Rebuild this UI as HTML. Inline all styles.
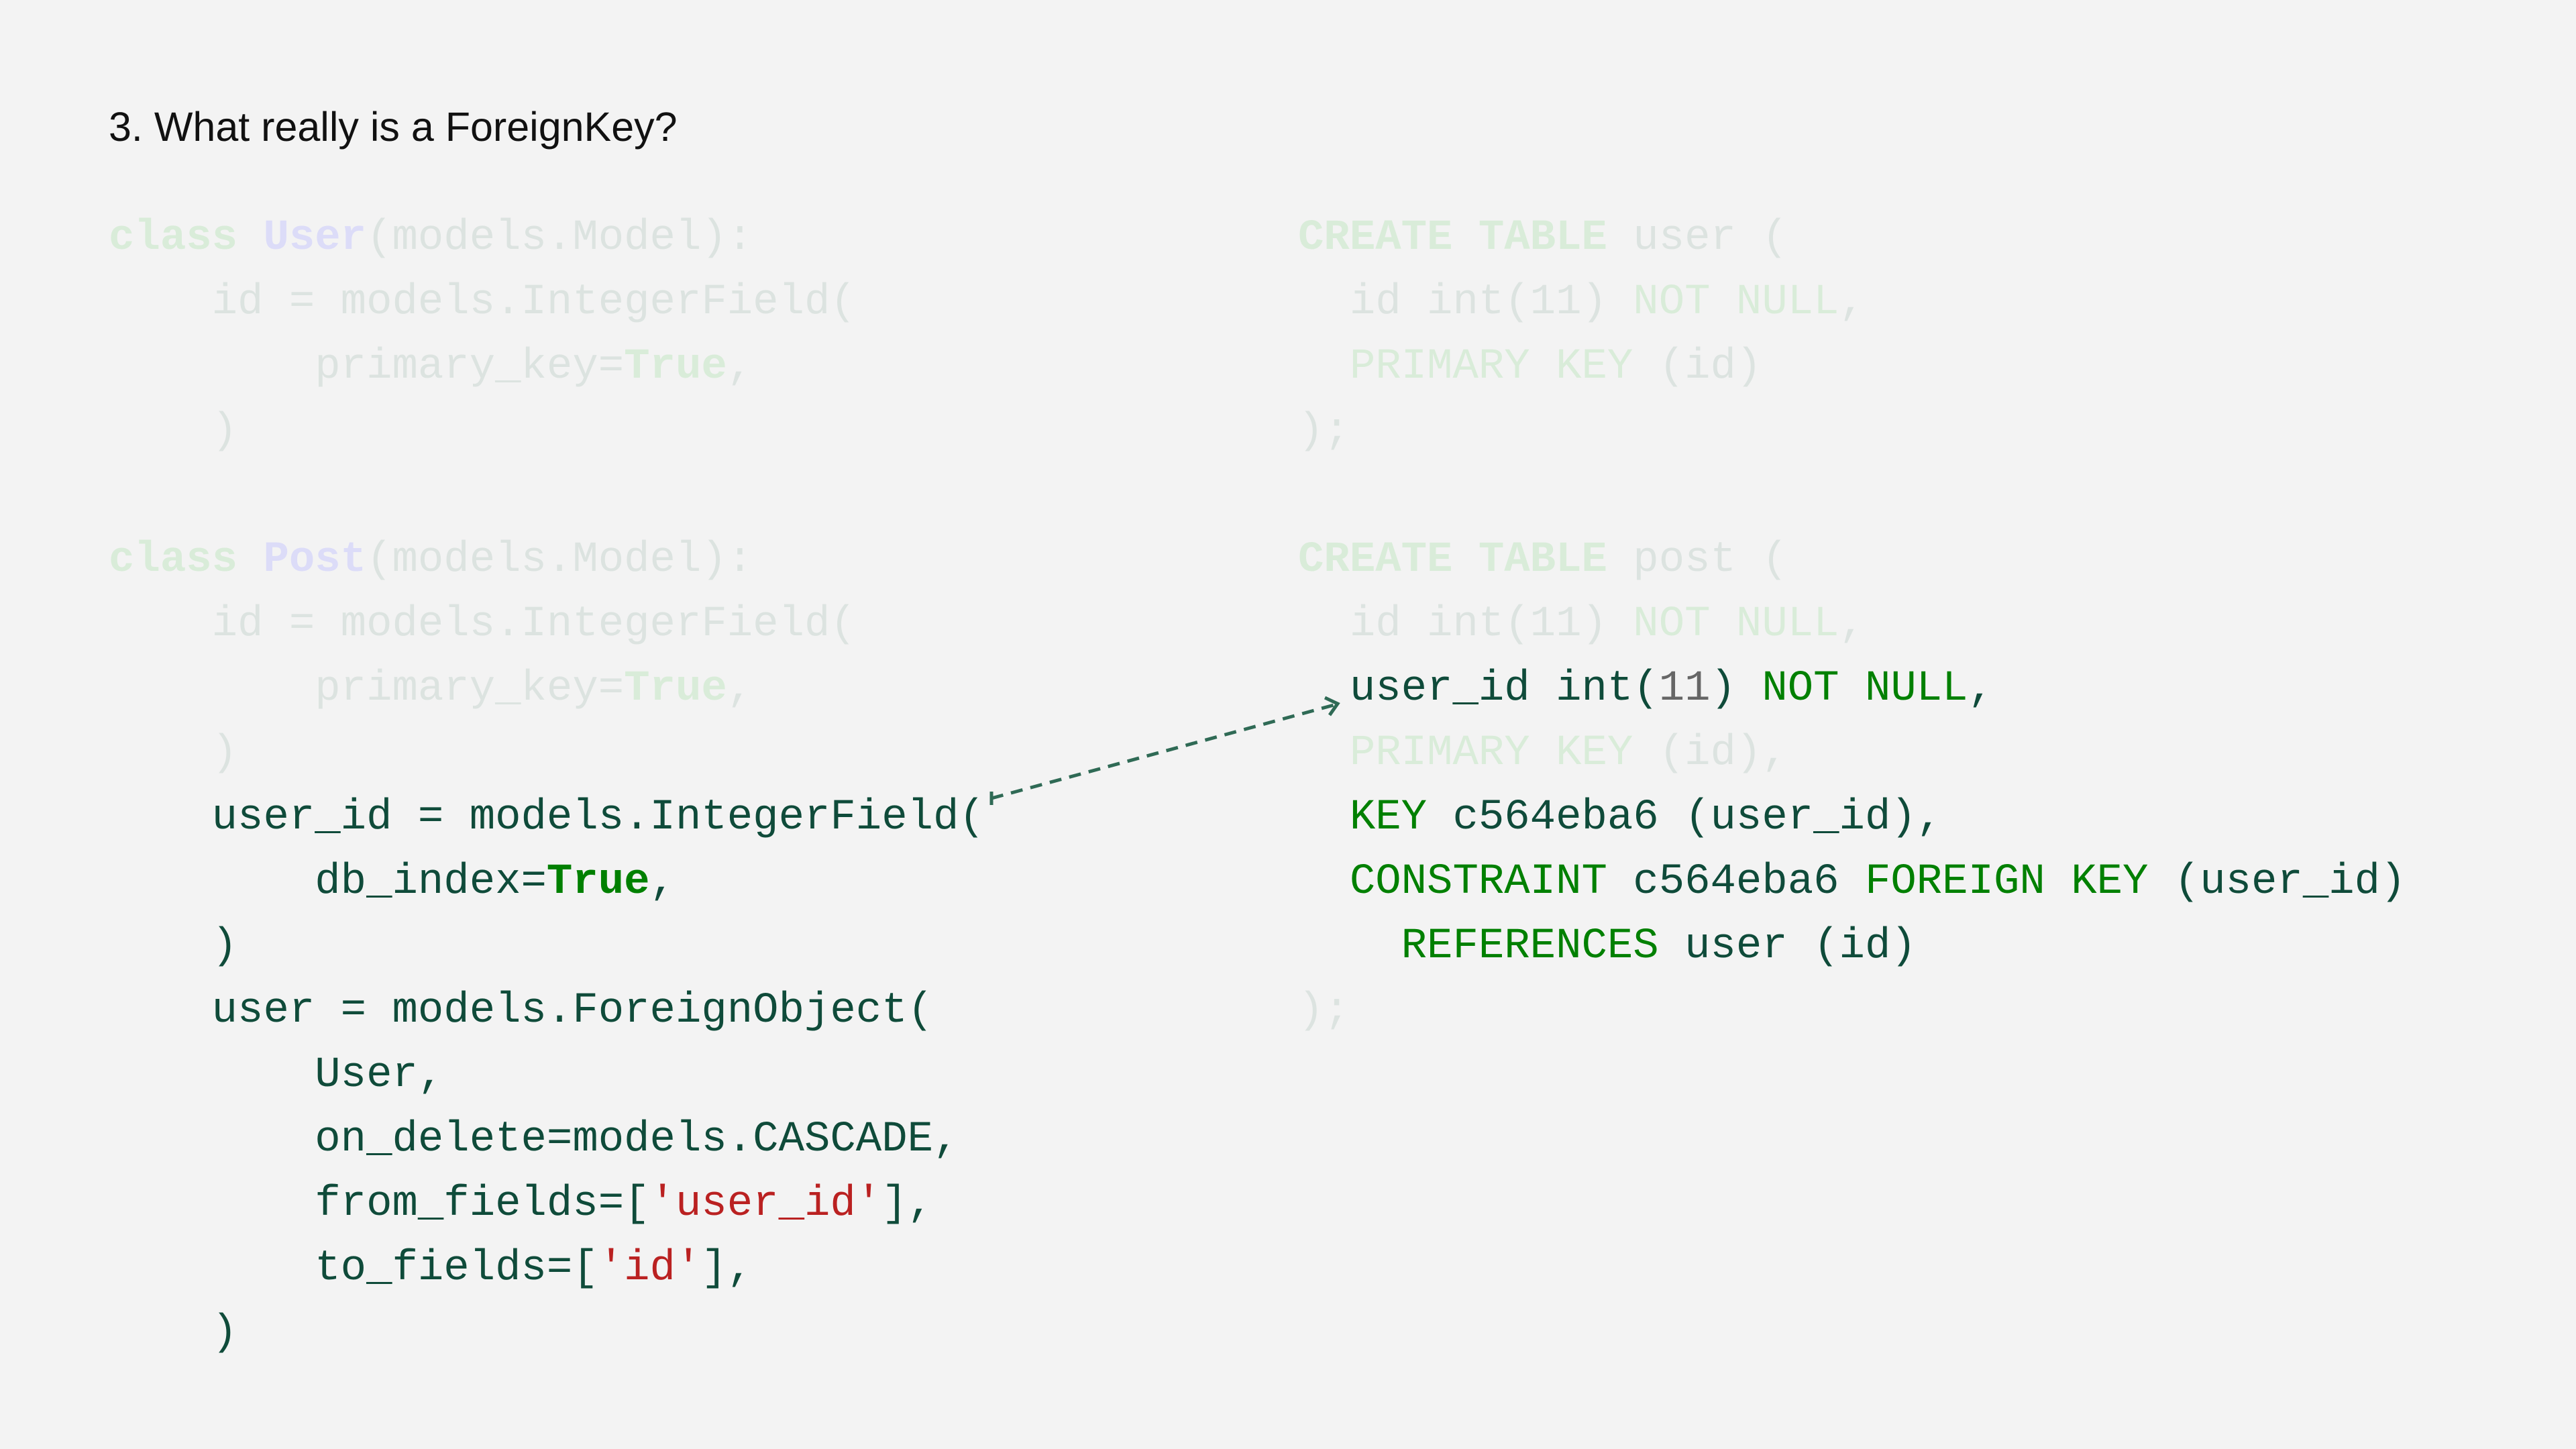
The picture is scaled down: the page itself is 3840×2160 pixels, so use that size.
<!DOCTYPE html>
<html><head><meta charset="utf-8"><style>
html,body{margin:0;padding:0;}
body{width:3840px;height:2160px;background:#f3f3f3;position:relative;overflow:hidden;}
.title{position:absolute;left:162px;top:154px;font-family:"Liberation Sans",sans-serif;font-size:61px;color:#111;}
pre{position:absolute;margin:0;font-family:"Liberation Mono",monospace;font-size:64px;line-height:96px;color:#0f4b3a;}
.f{color:#dce3e0}
.fk{color:#d9ecd9}
.fkb{color:#d9ecd9;font-weight:bold}
.fc{color:#dcdcf8;font-weight:bold}
.k{color:#008000}
.kb{color:#008000;font-weight:bold}
.s{color:#ba2121}
.n{color:#666}
</style></head><body>
<div class="title">3. What really is a ForeignKey?</div>
<pre style="left:162px;top:307px;"><span class="fkb">class</span><span class="f"> </span><span class="fc">User</span><span class="f">(models.Model):</span>
<span class="f">    id = models.IntegerField(</span>
<span class="f">        primary_key=</span><span class="fkb">True</span><span class="f">,</span>
<span class="f">    )</span>

<span class="fkb">class</span><span class="f"> </span><span class="fc">Post</span><span class="f">(models.Model):</span>
<span class="f">    id = models.IntegerField(</span>
<span class="f">        primary_key=</span><span class="fkb">True</span><span class="f">,</span>
<span class="f">    )</span>
    user_id = models.IntegerField(
        db_index=<span class="kb">True</span>,
    )
    user = models.ForeignObject(
        User,
        on_delete=models.CASCADE,
        from_fields=[<span class="s">'user_id'</span>],
        to_fields=[<span class="s">'id'</span>],
    )</pre>
<pre style="left:1935px;top:307px;"><span class="fkb">CREATE TABLE</span><span class="f"> user (</span>
<span class="f">  id </span><span class="f">int(11) </span><span class="fk">NOT NULL</span><span class="f">,</span>
<span class="fk">  PRIMARY KEY</span><span class="f"> (id)</span>
<span class="f">);</span>

<span class="fkb">CREATE TABLE</span><span class="f"> post (</span>
<span class="f">  id int(11) </span><span class="fk">NOT NULL</span><span class="f">,</span>
  user_id int(<span class="n">11</span>) <span class="k">NOT NULL</span>,
<span class="fk">  PRIMARY KEY</span><span class="f"> (id),</span>
  <span class="k">KEY</span> c564eba6 (user_id),
  <span class="k">CONSTRAINT</span> c564eba6 <span class="k">FOREIGN KEY</span> (user_id)
    <span class="k">REFERENCES</span> user (id)
<span class="f">);</span></pre>
<svg style="position:absolute;left:0;top:0" width="3840" height="2160">
<line x1="1478" y1="1190" x2="1992" y2="1050" stroke="#2f6a55" stroke-width="5" stroke-dasharray="18 12"/>
<polyline points="1975,1040 1994,1049 1982,1066" fill="none" stroke="#2f6a55" stroke-width="5"/>
<line x1="1478" y1="1180" x2="1478" y2="1200" stroke="#2f6a55" stroke-width="5"/>
</svg>
</body></html>
